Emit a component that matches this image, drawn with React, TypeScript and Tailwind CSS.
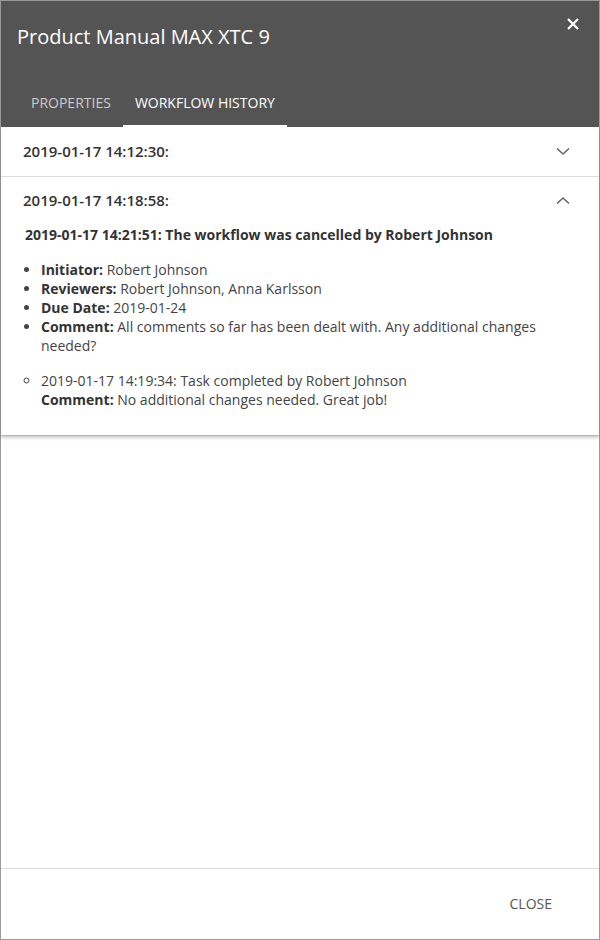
import React from "react";

function ChevronDown() {
  return (
    <svg width="14" height="9" viewBox="0 0 14 9" fill="none" stroke="#666" strokeWidth="1.6">
      <path d="M1 1.5 L7 7 L13 1.5" />
    </svg>
  );
}
function ChevronUp() {
  return (
    <svg width="14" height="9" viewBox="0 0 14 9" fill="none" stroke="#666" strokeWidth="1.6">
      <path d="M1 7.5 L7 2 L13 7.5" />
    </svg>
  );
}

export default function App() {
  return (
    <div
      className="w-[600px] h-[940px] flex flex-col border border-[#9a9a9a] bg-white text-[#333]"
      style={{ fontFamily: '"Open Sans", "Liberation Sans", sans-serif' }}
    >
      <div className="bg-[#545454] h-[126px] flex flex-col shrink-0">
        <div className="flex items-start justify-between pl-[16px] pr-[20px]">
          <div className="text-white text-[20px] leading-[28px] mt-[22px]">Product Manual MAX XTC 9</div>
          <svg className="mt-[17px]" width="12" height="12" viewBox="0 0 12 12" stroke="white" strokeWidth="2.2">
            <path d="M1 1 L11 11 M11 1 L1 11" />
          </svg>
        </div>
        <div className="flex mt-auto pl-[18px]">
          <div className="px-[12px] pb-[15px] text-[14px] leading-[18px] text-[#cbcbcb]">PROPERTIES</div>
          <div className="px-[12px] pb-[13px] text-[14px] leading-[18px] text-white border-b-2 border-white">WORKFLOW HISTORY</div>
        </div>
      </div>

      <div className="shadow-[0_2px_3px_rgba(0,0,0,0.2)] border-b border-[#b5b5b5]">
        <div className="h-[50px] flex items-center justify-between pl-[22px] pr-[29px] pb-[1px] border-b border-[#dcdcdc]">
          <div className="text-[15px] font-semibold text-[#333]">2019-01-17 14:12:30:</div>
          <ChevronDown />
        </div>
        <div className="pt-[12px] pb-[26px]">
          <div className="flex items-center justify-between pl-[22px] pr-[29px] h-[22px]">
            <div className="text-[15px] font-semibold text-[#333]">2019-01-17 14:18:58:</div>
            <ChevronUp />
          </div>
          <div className="pl-[24px] pr-[20px] mt-[14px]">
            <div className="text-[14px] font-bold leading-[20px] text-[#333]">
              2019-01-17 14:21:51: The workflow was cancelled by Robert Johnson
            </div>
            <ul className="list-disc pl-[16px] mt-[15px] text-[14px] leading-[19px] text-[#444]">
              <li><span className="font-bold text-[#333]">Initiator:</span> Robert Johnson</li>
              <li><span className="font-bold text-[#333]">Reviewers:</span> Robert Johnson, Anna Karlsson</li>
              <li><span className="font-bold text-[#333]">Due Date:</span> 2019-01-24</li>
              <li><span className="font-bold text-[#333]">Comment:</span> All comments so far has been dealt with. Any additional changes needed?</li>
            </ul>
            <ul className="list-[circle] pl-[16px] mt-[16px] text-[14px] leading-[19px] text-[#444]">
              <li>
                2019-01-17 14:19:34: Task completed by Robert Johnson
                <br />
                <span className="font-bold text-[#333]">Comment:</span> No additional changes needed. Great job!
              </li>
            </ul>
          </div>
        </div>
      </div>

      <div className="flex-1" />

      <div className="h-[71px] border-t border-[#dcdcdc] flex items-center justify-end pr-[47px] shrink-0">
        <div className="text-[14px] text-[#555] mt-[-1px]">CLOSE</div>
      </div>
    </div>
  );
}
